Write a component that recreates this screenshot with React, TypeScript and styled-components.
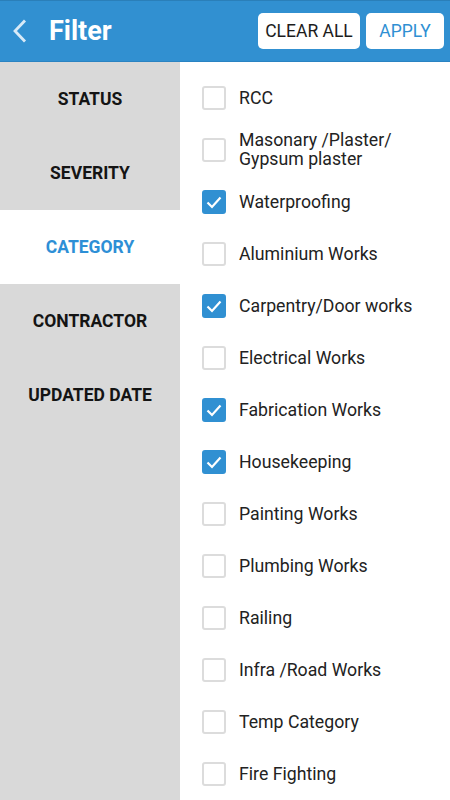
import { FC, useState } from 'react';
import styled, { createGlobalStyle } from 'styled-components';

const GlobalStyle = createGlobalStyle`
  html, body {
    margin: 0;
    padding: 0;
    background: #ffffff;
    font-family: Roboto, 'Liberation Sans', sans-serif;
  }
`;

const Screen = styled.div`
  width: 450px;
  height: 800px;
  display: flex;
  flex-direction: column;
  overflow: hidden;
`;

const Header = styled.div`
  height: 62px;
  flex-shrink: 0;
  display: flex;
  align-items: center;
  background: #3190d1;
  border-top: 1px solid #2a7fb9;
  border-bottom: 1px solid #2a83c2;
  box-sizing: border-box;
  padding: 0 6px 0 12px;
`;

const BackButton = styled.div`
  width: 18px;
  height: 26px;
  display: flex;
  align-items: center;
  justify-content: flex-start;
`;

const Title = styled.div`
  margin-left: 19px;
  font-size: 27px;
  font-weight: 700;
  color: #ffffff;
  flex: 1;
`;

const HeaderButton = styled.div<{ $primary?: boolean }>`
  width: ${({ $primary }) => ($primary ? '78px' : '102px')};
  height: 36px;
  margin-left: 6px;
  display: flex;
  align-items: center;
  justify-content: center;
  background: #ffffff;
  border-radius: 5px;
  font-size: 17.5px;
  color: ${({ $primary }) => ($primary ? '#2f8fd3' : '#1c1c1c')};
`;

const Body = styled.div`
  flex: 1;
  display: flex;
`;

const Sidebar = styled.div`
  width: 180px;
  background: #d9d9d9;
  display: flex;
  flex-direction: column;
`;

const Tab = styled.div<{ $active?: boolean }>`
  height: 74px;
  display: flex;
  align-items: center;
  justify-content: center;
  font-size: 17.5px;
  font-weight: 700;
  color: ${({ $active }) => ($active ? '#2d8fd6' : '#141414')};
  background: ${({ $active }) => ($active ? '#ffffff' : 'transparent')};
`;

const List = styled.div`
  flex: 1;
  padding-top: 10px;
  display: flex;
  flex-direction: column;
`;

const Row = styled.div`
  height: 52px;
  flex-shrink: 0;
  display: flex;
  align-items: center;
  padding-left: 22px;
`;

const Box = styled.div<{ $checked?: boolean }>`
  width: 24px;
  height: 24px;
  box-sizing: border-box;
  border-radius: 3px;
  border: 2px solid ${({ $checked }) => ($checked ? '#3090d2' : '#dcdcdc')};
  background: ${({ $checked }) => ($checked ? '#3090d2' : '#ffffff')};
  display: flex;
  align-items: center;
  justify-content: center;
  flex-shrink: 0;
`;

const Label = styled.div`
  margin-left: 13px;
  font-size: 17.7px;
  line-height: 19px;
  color: #222222;
`;

const tabs = ['STATUS', 'SEVERITY', 'CATEGORY', 'CONTRACTOR', 'UPDATED DATE'];

const categories = [
  { name: 'RCC', checked: false },
  { name: 'Masonary /Plaster/\nGypsum plaster', checked: false },
  { name: 'Waterproofing', checked: true },
  { name: 'Aluminium Works', checked: false },
  { name: 'Carpentry/Door works', checked: true },
  { name: 'Electrical Works', checked: false },
  { name: 'Fabrication Works', checked: true },
  { name: 'Housekeeping', checked: true },
  { name: 'Painting Works', checked: false },
  { name: 'Plumbing Works', checked: false },
  { name: 'Railing', checked: false },
  { name: 'Infra /Road Works', checked: false },
  { name: 'Temp Category', checked: false },
  { name: 'Fire Fighting', checked: false },
];

const App: FC = () => {
  const [items, setItems] = useState(categories);
  const toggle = (idx: number) =>
    setItems((prev) => prev.map((v, i) => (i === idx ? { ...v, checked: !v.checked } : v)));

  return (
    <Screen>
      <GlobalStyle />
      <Header>
        <BackButton>
          <svg width="15" height="24" viewBox="0 0 15 24">
            <path d="M13 1.5 L3 12 L13 22.5" fill="none" stroke="#d8eaf7" strokeWidth="2.8" />
          </svg>
        </BackButton>
        <Title>Filter</Title>
        <HeaderButton>CLEAR ALL</HeaderButton>
        <HeaderButton $primary>APPLY</HeaderButton>
      </Header>
      <Body>
        <Sidebar>
          {tabs.map((t) => (
            <Tab key={t} $active={t === 'CATEGORY'}>
              {t}
            </Tab>
          ))}
        </Sidebar>
        <List>
          {items.map(({ name, checked }, i) => (
            <Row key={name} onClick={() => toggle(i)}>
              <Box $checked={checked}>
                {checked && (
                  <svg width="18" height="18" viewBox="0 0 18 18">
                    <path d="M2.5 9.5 L7 14 L15.5 4.5" fill="none" stroke="#ffffff" strokeWidth="2.2" />
                  </svg>
                )}
              </Box>
              <Label>
                {name.split('\n').map((line) => (
                  <div key={line}>{line}</div>
                ))}
              </Label>
            </Row>
          ))}
        </List>
      </Body>
    </Screen>
  );
};

export default App;
